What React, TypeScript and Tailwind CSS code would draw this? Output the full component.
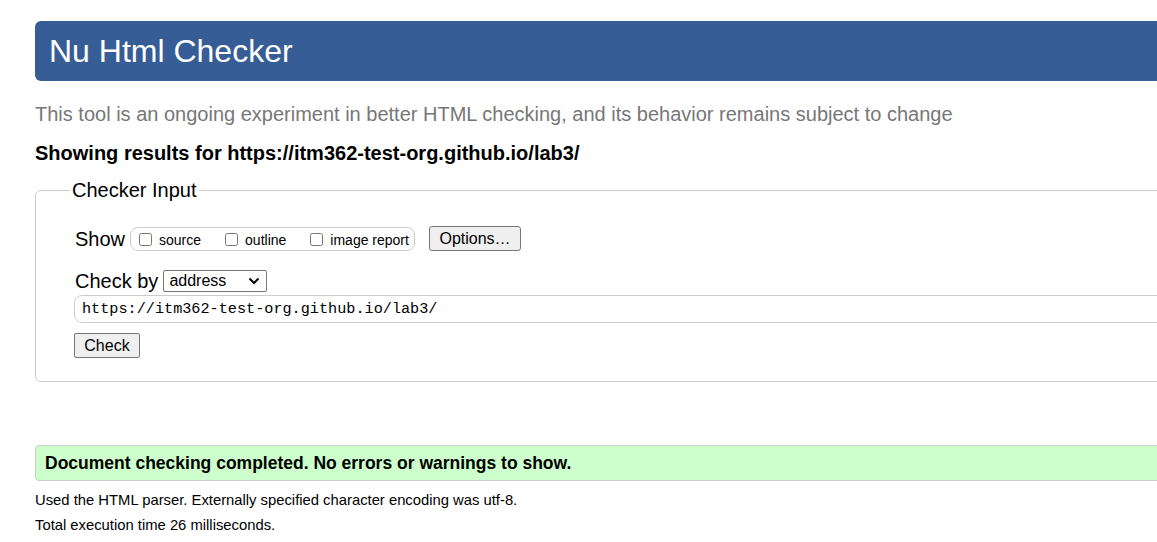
export default function App() {
    return (
        <div
            className="w-[1157px] h-[542px] overflow-hidden bg-white text-black"
            style={{ fontFamily: '"Liberation Sans", Arial, sans-serif' }}
        >
            <div className="w-[1400px] pl-[35px] pt-[21px]">
                {/* Title bar */}
                <h1 className="h-[60px] rounded-l-md bg-[#365d95] pl-[14px] text-[32px] leading-[60px] text-white">
                    Nu Html Checker
                </h1>

                <p className="mt-[21px] text-[20px] leading-[24px] text-[#777777]">
                    This tool is an ongoing experiment in better HTML checking, and its behavior remains subject to change
                </p>

                <p className="mt-[15px] text-[20px] font-bold leading-[24px]">
                    Showing results for https://itm362-test-org.github.io/lab3/
                </p>

                {/* Checker input */}
                <fieldset className="mt-[13px] rounded-md border border-[#cccccc] pl-[34px] pb-[23px]">
                    <legend className="px-[2px] text-[20px] leading-[24px]">Checker Input</legend>

                    <div className="ml-[5px] mt-[24px] flex items-center">
                        <span className="text-[20px] leading-[24px]">Show</span>
                        <div className="ml-[5px] flex h-[24px] w-[285px] items-center rounded-lg border border-[#cccccc] pl-[8px] text-[14px]">
                            <label className="flex items-end">
                                <input type="checkbox" className="mb-[1px] h-[13px] w-[13px]" />
                                <span className="ml-[7px] leading-[16px] translate-y-[1px]">source</span>
                            </label>
                            <label className="ml-[24px] flex items-end">
                                <input type="checkbox" className="mb-[1px] h-[13px] w-[13px]" />
                                <span className="ml-[7px] leading-[16px] translate-y-[1px]">outline</span>
                            </label>
                            <label className="ml-[24px] flex items-end">
                                <input type="checkbox" className="mb-[1px] h-[13px] w-[13px]" />
                                <span className="ml-[7px] leading-[16px] translate-y-[1px]">image report</span>
                            </label>
                        </div>
                        <button className="ml-[14px] h-[25px] w-[92px] rounded-[3px] border border-[#767676] bg-[#efefef] text-[16px] leading-[20px]">
                            Options…
                        </button>
                    </div>

                    <div className="ml-[5px] mt-[18px] flex items-center">
                        <span className="text-[20px] leading-[24px]">Check by</span>
                        <div className="ml-[5px] flex h-[22px] w-[104px] items-center justify-between rounded-[2px] border border-[#767676] pl-[5px] pr-[6px] text-[16px]">
                            <span className="leading-[18px]">address</span>
                            <svg width="12" height="8" viewBox="0 0 12 8" fill="none">
                                <path d="M1.5 1.5 L6 6 L10.5 1.5" stroke="#000" strokeWidth="2" />
                            </svg>
                        </div>
                    </div>

                    <div className="ml-[4px] mt-[2px] flex h-[28px] items-center rounded-lg border border-[#cccccc] pl-[7px]">
                        <span
                            className="text-[15.2px] leading-[20px]"
                            style={{ fontFamily: '"Liberation Mono", "DejaVu Sans Mono", monospace' }}
                        >
                            https://itm362-test-org.github.io/lab3/
                        </span>
                    </div>

                    <button className="ml-[4px] mt-[10px] h-[25px] w-[66px] rounded-[2px] border border-[#767676] bg-[#efefef] text-[16px] leading-[20px]">
                        Check
                    </button>
                </fieldset>

                {/* Result */}
                <div className="mt-[63px] flex h-[36px] items-center rounded-l-[4px] border border-[#cccccc] bg-[#ccffcc] pl-[9px]">
                    <span className="text-[17.5px] font-bold leading-[20px]">
                        Document checking completed. No errors or warnings to show.
                    </span>
                </div>

                <p className="mt-[9px] text-[14.8px] leading-[20px]">
                    Used the HTML parser. Externally specified character encoding was utf-8.
                </p>
                <p className="mt-[5px] text-[14.8px] leading-[20px]">Total execution time 26 milliseconds.</p>
            </div>
        </div>
    );
}
